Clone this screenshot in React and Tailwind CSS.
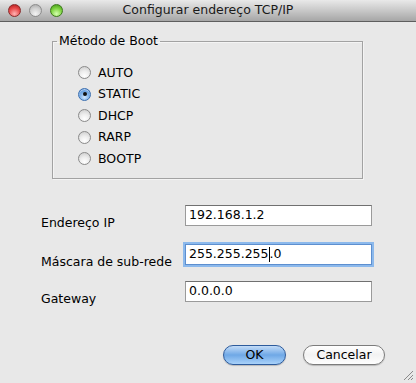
import React from "react";

function Radio({ checked, label }) {
  return (
    <div className="flex h-[21.5px] items-center">
      {checked ? (
        <div className="flex h-[13px] w-[13px] items-center justify-center rounded-full border border-[#3b6fb0] bg-[radial-gradient(circle_at_50%_75%,#cfe6ff,#7fb2ea_45%,#3d7fd0_100%)] shadow-[inset_0_1px_1px_rgba(255,255,255,0.6)]">
          <div className="h-[4px] w-[4px] rounded-full bg-[#111]" />
        </div>
      ) : (
        <div className="h-[13px] w-[13px] rounded-full border border-[#8a8a8a] bg-[radial-gradient(circle_at_50%_80%,#ffffff,#ededed_45%,#c9c9c9_100%)]" />
      )}
      <span className="ml-[7px] text-[12.5px] leading-none text-black">{label}</span>
    </div>
  );
}

function Field({ label, children, focused, className = "" }) {
  return (
    <div className={"flex h-[21px] items-start " + className}>
      <div className="w-[144px] pt-[10px] text-[12.5px] leading-[16px] whitespace-nowrap text-black">{label}</div>
      <div
        className={
          "flex h-[21px] w-[187px] items-center bg-white pl-[3px] text-[12.5px] text-black " +
          (focused
            ? "border border-[#5d8fcf] shadow-[0_0_0_2px_#8cb9ec]"
            : "border border-[#9a9a9a] border-t-[#707070]")
        }
      >
        {children}
      </div>
    </div>
  );
}

export default function App() {
  return (
    <div
      className="relative flex h-[383px] w-[416px] flex-col overflow-hidden bg-[#e8e8e8]"
      style={{ fontFamily: '"DejaVu Sans", "Liberation Sans", Arial, sans-serif' }}
    >
      {/* Title bar */}
      <div className="relative flex h-[22px] shrink-0 items-center justify-center border-b border-[#5e5e5e] bg-gradient-to-b from-[#e9e9e9] via-[#c8c8c8] to-[#a6a6a6]">
        <div className="absolute left-[8px] top-[4px] flex gap-[8px]">
          <div className="h-[13px] w-[13px] rounded-full border border-[#8a2a2a] bg-[radial-gradient(circle_at_50%_80%,#ffb3b3,#e84a4a_55%,#a81818_100%)]" />
          <div className="h-[13px] w-[13px] rounded-full border border-[#8c8c8c] bg-[radial-gradient(circle_at_50%_80%,#f4f4f4,#cfcfcf_55%,#a3a3a3_100%)]" />
          <div className="h-[13px] w-[13px] rounded-full border border-[#3c7a1c] bg-[radial-gradient(circle_at_50%_80%,#d6ffb0,#7cd23e_55%,#3e8f14_100%)]" />
        </div>
        <span className="text-[12.5px] leading-none text-[#1a1a1a]">Configurar endereço TCP/IP</span>
      </div>

      {/* Group box */}
      <fieldset className="ml-[52px] mt-[11px] h-[146px] w-[311px] shrink-0 border border-[#a2a2a2] px-[25px] pb-[8px] pt-[13px] shadow-[inset_1px_1px_0_#f4f4f4,1px_1px_0_#f4f4f4]">
        <legend className="-ml-[21px] px-[2px] text-[12.5px] leading-[16px] text-black">Método de Boot</legend>
        <div className="flex flex-col">
          <Radio label="AUTO" />
          <Radio label="STATIC" checked />
          <Radio label="DHCP" />
          <Radio label="RARP" />
          <Radio label="BOOTP" />
        </div>
      </fieldset>

      {/* Fields */}
      <div className="ml-[41px] mt-[26px] flex flex-col">
        <Field label="Endereço IP">192.168.1.2</Field>
        <Field label="Máscara de sub-rede" focused className="mt-[18px]">
          <span>255.255.255</span>
          <span className="inline-block h-[15px] w-px bg-black" />
          <span>.0</span>
        </Field>
        <Field label="Gateway" className="mt-[16px]">0.0.0.0</Field>
      </div>

      {/* Buttons */}
      <div className="mr-[31px] mt-[43px] flex justify-end gap-[17px]">
        <div className="flex h-[20px] w-[63px] items-center justify-center rounded-full border border-[#2d5b9c] bg-gradient-to-b from-[#c3dcf7] via-[#6fa8e6] to-[#a9d2fa] text-[12.5px] leading-none text-black shadow-[0_1px_1px_rgba(0,0,0,0.2)]">
          OK
        </div>
        <div className="flex h-[20px] w-[82px] items-center justify-center rounded-full border border-[#7c7c7c] bg-gradient-to-b from-[#ffffff] via-[#f2f2f2] to-[#ffffff] text-[12.5px] leading-none text-black shadow-[0_1px_1px_rgba(0,0,0,0.2)]">
          Cancelar
        </div>
      </div>

      {/* Resize grip */}
      <svg className="absolute bottom-[2px] right-[2px]" width="11" height="11" viewBox="0 0 11 11">
        <path d="M10 1 L1 10 M10 5 L5 10 M10 8 L8 10" stroke="#8a8a8a" strokeWidth="1" />
      </svg>
    </div>
  );
}
